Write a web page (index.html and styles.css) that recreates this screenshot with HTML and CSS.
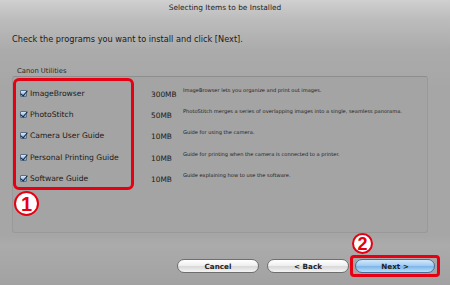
FILE: index.html
```html
<!DOCTYPE html>
<html lang="en">
<head>
  <meta charset="UTF-8" />
  <title>Selecting Items to be Installed</title>
  <link rel="stylesheet" href="styles.css">
</head>
<body>
  <div class="window">
    <div class="titlebar">Selecting Items to be Installed</div>
    <p class="intro">Check the programs you want to install and click [Next].</p>

    <div class="group-label">Canon Utilities</div>
    <div class="group">
      <div class="item">
        <span class="check"></span>
        <span class="name">ImageBrowser</span>
        <span class="size">300MB</span>
        <span class="desc">ImageBrowser lets you organize and print out images.</span>
      </div>
      <div class="item">
        <span class="check"></span>
        <span class="name">PhotoStitch</span>
        <span class="size">50MB</span>
        <span class="desc">PhotoStitch merges a series of overlapping images into a single, seamless panorama.</span>
      </div>
      <div class="item">
        <span class="check"></span>
        <span class="name">Camera User Guide</span>
        <span class="size">10MB</span>
        <span class="desc">Guide for using the camera.</span>
      </div>
      <div class="item">
        <span class="check"></span>
        <span class="name">Personal Printing Guide</span>
        <span class="size">10MB</span>
        <span class="desc">Guide for printing when the camera is connected to a printer.</span>
      </div>
      <div class="item">
        <span class="check"></span>
        <span class="name">Software Guide</span>
        <span class="size">10MB</span>
        <span class="desc">Guide explaining how to use the software.</span>
      </div>

      <div class="mark mark-list"></div>
      <div class="badge badge-1">1</div>
    </div>

    <div class="buttons">
      <button class="btn">Cancel</button>
      <button class="btn">&lt; Back</button>
      <div class="next-wrap">
        <button class="btn btn-next">Next &gt;</button>
        <div class="badge badge-2">2</div>
      </div>
    </div>
  </div>
</body>
</html>
```

FILE: styles.css
```css
body {
  margin: 0;
  font-family: "DejaVu Sans", "Liberation Sans", sans-serif;
}
.window {
  width: 450px;
  height: 285px;
  box-sizing: border-box;
  display: flex;
  flex-direction: column;
  background: linear-gradient(#d0d0d0 0px, #bdbdbd 18px, #ababab 50px, #a6a6a6 90px, #a6a6a6 235px, #ababab 245px, #a2a2a2 285px);
  color: #1a1a1a;
  overflow: hidden;
}
.titlebar {
  height: 15px;
  line-height: 15px;
  text-align: center;
  font-size: 7.4px;
  color: #222;
}
.intro {
  margin: 19px 0 0 12px;
  font-size: 8.2px;
  line-height: 10px;
}
.group-label {
  margin: 23px 0 0 17px;
  font-size: 6.8px;
  line-height: 8px;
  color: #2a2a2a;
}
.group {
  position: relative;
  margin: 1px 0 0 12px;
  width: 416px;
  height: 157px;
  box-sizing: border-box;
  padding-top: 6px;
  border: 1px solid #999;
  border-top-color: #8e8e8e;
  border-radius: 3px;
  background: #a4a4a4;
}
.item {
  display: grid;
  grid-template-columns: 7px 124px 32px 1fr;
  align-items: center;
  height: 21.2px;
  padding-left: 7px;
}
.check {
  width: 7px;
  height: 7px;
  box-sizing: border-box;
  border: 1px solid #5a6f88;
  border-radius: 1px;
  background: linear-gradient(#d8e8f8, #7ea8d8);
  position: relative;
}
.check::after {
  content: "";
  position: absolute;
  left: 1px;
  top: -2px;
  width: 3px;
  height: 6px;
  border: solid #14243c;
  border-width: 0 1.5px 1.5px 0;
  transform: rotate(40deg);
}
.name {
  padding-left: 3px;
  font-size: 7.6px;
}
.size {
  font-size: 7.4px;
  padding-top: 2px;
}
.desc {
  font-size: 5.1px;
  align-self: start;
  padding-top: 4px;
  color: #1e1e1e;
  white-space: nowrap;
}
.mark {
  position: absolute;
  border: 3px solid #e60012;
  border-radius: 6px;
}
.mark-list {
  left: 0px;
  top: 1px;
  width: 115px;
  height: 106px;
}
.badge {
  position: absolute;
  width: 21px;
  height: 21px;
  box-sizing: border-box;
  border: 2px solid #e60012;
  border-radius: 50%;
  background: #fff;
  color: #e60012;
  font-family: "Liberation Sans", sans-serif;
  font-weight: bold;
  font-size: 18px;
  line-height: 18px;
  text-align: center;
}
.badge-1 {
  left: 1px;
  top: 114px;
  width: 25px;
  height: 25px;
  line-height: 22px;
  font-size: 20px;
}
.buttons {
  display: flex;
  align-items: center;
  gap: 8px;
  margin: 22px 0 0 177px;
}
.btn {
  width: 82px;
  height: 14px;
  padding: 0;
  font-family: "DejaVu Sans", sans-serif;
  font-size: 7.2px;
  font-weight: bold;
  color: #222;
  border: 1px solid #6e6e6e;
  border-radius: 7px;
  background: linear-gradient(#ffffff, #f0f0f0 45%, #d8d8d8 55%, #f4f4f4);
}
.next-wrap {
  position: relative;
  display: flex;
  border: 3px solid #e60012;
  border-radius: 4px;
  padding: 1px 2px;
  margin-left: -7px;
}
.btn-next {
  width: 80px;
  border-color: #4a6b96;
  background: linear-gradient(#d2e8fb, #a4cdf3 45%, #7fb5ea 55%, #b8e0fb);
}
.badge-2 {
  left: -1px;
  top: -25px;
}
```
